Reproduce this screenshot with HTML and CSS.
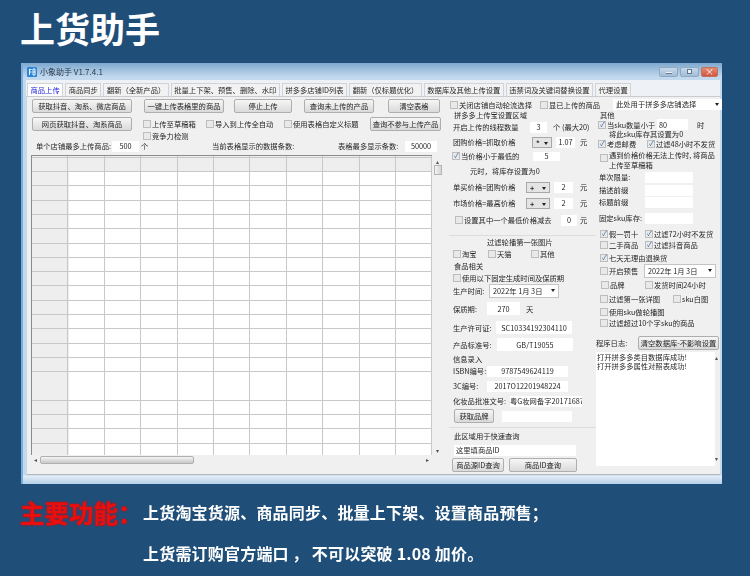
FILE: index.html
```html
<!DOCTYPE html>
<html lang="zh-CN">
<head>
    <meta charset="UTF-8">
    <meta name="viewport" content="width=device-width, initial-scale=1.0">
    <title>上货助手</title>
    <link rel="stylesheet" href="styles.css">
</head>
<body>
    <h1 class="page-title">上货助手</h1>

    <!-- Application window -->
    <div class="window">
        <div class="titlebar">
            <svg class="app-icon" viewBox="0 0 10 10">
                <rect width="10" height="10" rx="1" fill="#2f86d8"/>
                <path d="M2.5 2v6M2.5 2.5h2M2.5 5h2M6 2h2v6H6zM6 5h2" fill="none" stroke="#fff" stroke-width="0.9"/>
            </svg>
            <span class="app-name">小象助手 V1.7.4.1</span>
            <div class="win-buttons">
                <span class="win-btn"><i class="glyph-min"></i></span>
                <span class="win-btn"><i class="glyph-max"></i></span>
                <span class="win-btn close">×</span>
            </div>
        </div>

        <div class="tabs">
            <span class="tab active">商品上传</span>
            <span class="tab">商品同步</span>
            <span class="tab">翻新（全新产品）</span>
            <span class="tab">批量上下架、预售、删除、水印</span>
            <span class="tab">拼多多店铺ID列表</span>
            <span class="tab">翻新（仅标题优化）</span>
            <span class="tab">数据库及其他上传设置</span>
            <span class="tab">违禁词及关键词替换设置</span>
            <span class="tab">代理设置</span>
        </div>

        <div class="panel">
            <!-- Left: actions and product table -->
            <div class="col col-left">
                <div class="row h14">
                    <button class="btn ml5 w100">获取抖音、淘系、微店商品</button>
                    <button class="btn ml12 w80">一键上传表格里的商品</button>
                    <button class="btn ml10 w58">停止上传</button>
                    <button class="btn ml12 w70">查询未上传的产品</button>
                    <button class="btn ml14 w52">清空表格</button>
                </div>
                <div class="row h14 mt4">
                    <button class="btn ml5 w100">网页获取抖音、淘系商品</button>
                    <label class="check ml11 w63"><input type="checkbox">上传至草稿箱</label>
                    <label class="check w78"><input type="checkbox">导入到上传全自动</label>
                    <label class="check w86"><input type="checkbox">使用表格自定义标题</label>
                    <button class="btn w71">查询不参与上传产品</button>
                </div>
                <div class="row h9">
                    <label class="check ml116"><input type="checkbox">竞争力检测</label>
                </div>
                <div class="row h12">
                    <span class="ml9 w76">单个店铺最多上传商品:</span>
                    <input class="field w27" value="500">
                    <span class="ml2 w7">个</span>
                    <span class="ml64 w126">当前表格显示的数据条数:</span>
                    <span class="w67">表格最多显示条数:</span>
                    <input class="field w32" value="50000">
                </div>
                <div class="grid-view">
                    <div class="grid-body">
                        <div class="cells"></div>
                        <div class="vscroll">
                            <span class="arrow">▴</span>
                            <span class="vthumb"></span>
                            <span class="spacer"></span>
                            <span class="arrow">▾</span>
                        </div>
                    </div>
                    <div class="hscroll">
                        <span class="arrow">◂</span>
                        <span class="hthumb"></span>
                        <span class="spacer"></span>
                        <span class="arrow">▸</span>
                    </div>
                </div>
            </div>

            <!-- Middle: upload settings -->
            <div class="col col-mid">
                <div class="row h11">
                    <label class="check ml1 w90"><input type="checkbox">关闭店铺自动轮流选择</label>
                    <label class="check"><input type="checkbox">显已上传的商品</label>
                </div>
                <div class="row h10"><span class="ml5">拼多多上传宝设置区域</span></div>
                <div class="row h14">
                    <span class="ml4 w77">开启上传的线程数量</span>
                    <input class="field w17" value="3">
                    <span class="ml6">个 (最大20)</span>
                </div>
                <div class="row h16">
                    <span class="ml4 w79">团购价格=抓取价格</span>
                    <span class="select w20">*</span>
                    <input class="field ml4 w19" value="1.07">
                    <span class="ml5">元</span>
                </div>
                <div class="row h12">
                    <label class="check ml3 w81"><input type="checkbox" checked>当价格小于最低的</label>
                    <input class="field w27 h9" value="5">
                </div>
                <div class="row h17"><span class="ml21">元时，将库存设置为0</span></div>
                <div class="row h16">
                    <span class="ml4 w73">单买价格=团购价格</span>
                    <span class="select w24">+</span>
                    <input class="field ml4 w19" value="2">
                    <span class="ml7">元</span>
                </div>
                <div class="row h16">
                    <span class="ml4 w73">市场价格=最高价格</span>
                    <span class="select w24">+</span>
                    <input class="field ml4 w19" value="2">
                    <span class="ml7">元</span>
                </div>
                <div class="row h18">
                    <label class="check ml6 w106"><input type="checkbox">设置其中一个最低价格减去</label>
                    <input class="field w16" value="0">
                    <span class="ml3">元</span>
                </div>
                <div class="spacer-6"></div>
                <div class="row h13 group-top"><span class="ml38">过滤轮播第一张图片</span></div>
                <div class="row h11">
                    <label class="check ml4 w35"><input type="checkbox">淘宝</label>
                    <label class="check w43"><input type="checkbox">天猫</label>
                    <label class="check"><input type="checkbox">其他</label>
                </div>
                <div class="row h13"><span class="ml5">食品相关</span></div>
                <div class="row h11">
                    <label class="check ml4"><input type="checkbox">使用以下固定生成时间及保质期</label>
                </div>
                <div class="row h15">
                    <span class="ml4 w36">生产时间:</span>
                    <span class="select date w70">2022年 1月 3日</span>
                </div>
                <div class="row h21">
                    <span class="ml4 w34">保质期:</span>
                    <input class="field w33 h13" value="270">
                    <span class="ml6">天</span>
                </div>
                <div class="row h17">
                    <span class="ml4 w43">生产许可证:</span>
                    <input class="field w76 h13" value="SC10334192304110">
                </div>
                <div class="row h17">
                    <span class="ml4 w44">产品标准号:</span>
                    <input class="field w76 h13" value="GB/T19055">
                </div>
                <div class="row h11"><span class="ml4">信息录入</span></div>
                <div class="row h14">
                    <span class="ml4 w34">ISBN编号:</span>
                    <input class="field w81" value="9787549624119">
                </div>
                <div class="row h16">
                    <span class="ml4 w34">3C编号:</span>
                    <input class="field w81" value="2017O12201948224">
                </div>
                <div class="row h14">
                    <span class="ml4 w57">化妆品批准文号:</span>
                    <input class="field w72" value="粤G妆网备字20171687-">
                </div>
                <div class="row h16">
                    <button class="btn ml5 w40">获取品牌</button>
                    <input class="field ml8 w70">
                </div>
                <div class="spacer-3"></div>
                <div class="row h16 group-top"><span class="ml5">此区域用于快速查询</span></div>
                <div class="row h14">
                    <input class="field ml5 w122 left" value="这里填商品ID">
                </div>
                <div class="row h14 mt1">
                    <button class="btn ml3 w52">商品源ID查询</button>
                    <button class="btn ml5 w68">商品ID查询</button>
                </div>
            </div>

            <!-- Right: filters and log -->
            <div class="col col-right">
                <div class="row h11">
                    <span class="select ml17 w109 flat">此处用于拼多多店铺选择</span>
                </div>
                <div class="row h9"><span class="ml4">其他</span></div>
                <div class="row h11">
                    <label class="check ml2 w59"><input type="checkbox" checked>当sku数量小于</label>
                    <input class="field w31 left" value="80">
                    <span class="ml9">时</span>
                </div>
                <div class="row h8"><span class="ml13">将此sku库存其设置为0</span></div>
                <div class="row h12">
                    <label class="check ml2 w49"><input type="checkbox" checked>考虑邮费</label>
                    <label class="check"><input type="checkbox" checked>过滤48小时不发货</label>
                </div>
                <div class="row h20">
                    <label class="check two-line ml4"><input type="checkbox"><span>遇到价格价格无法上传时, 将商品上传至草稿箱</span></label>
                </div>
                <div class="row h14">
                    <span class="ml3 w46">单次限量:</span>
                    <input class="field w48 h11">
                </div>
                <div class="row h12">
                    <span class="ml3 w46">描述前缀</span>
                    <input class="field w48 h11">
                </div>
                <div class="row h12">
                    <span class="ml3 w46">标题前缀</span>
                    <input class="field w48 h11">
                </div>
                <div class="row h20">
                    <span class="ml3 w46">固定sku库存:</span>
                    <input class="field w48 h11">
                </div>
                <div class="row h11">
                    <label class="check ml4 w45"><input type="checkbox" checked>假一罚十</label>
                    <label class="check"><input type="checkbox" checked>过滤72小时不发货</label>
                </div>
                <div class="row h12">
                    <label class="check ml4 w45"><input type="checkbox">二手商品</label>
                    <label class="check"><input type="checkbox" checked>过滤抖音商品</label>
                </div>
                <div class="row h13">
                    <label class="check ml4"><input type="checkbox" checked>七天无理由退换货</label>
                </div>
                <div class="row h14">
                    <label class="check ml4 w44"><input type="checkbox">开启预售</label>
                    <span class="select date w72">2022年 1月 3日</span>
                </div>
                <div class="row h13">
                    <label class="check ml5 w44"><input type="checkbox">品牌</label>
                    <label class="check"><input type="checkbox">发货时间24小时</label>
                </div>
                <div class="row h15">
                    <label class="check ml4 w73"><input type="checkbox">过滤第一张详图</label>
                    <label class="check"><input type="checkbox">sku白图</label>
                </div>
                <div class="row h11">
                    <label class="check ml4"><input type="checkbox">使用sku做轮播图</label>
                </div>
                <div class="row h12">
                    <label class="check ml4"><input type="checkbox">过滤超过10个字sku的商品</label>
                </div>
                <div class="row h14 mt7">
                    <span class="w42">程序日志:</span>
                    <button class="btn w81">清空数据库-不影响设置</button>
                </div>
                <div class="log">
                    <div class="log-text">打开拼多多类目数据库成功!<br>打开拼多多属性对照表成功!</div>
                    <div class="log-scroll">
                        <span class="arrow">▴</span>
                        <span class="arrow">▾</span>
                    </div>
                </div>
            </div>
        </div>
    </div>

    <!-- Feature notes -->
    <div class="promo">
        <div class="promo-line first">
            <span class="promo-head">主要功能：</span>
            <span>上货淘宝货源、商品同步、批量上下架、设置商品预售；</span>
        </div>
        <div class="promo-line second">上货需订购官方端口<span class="wide-comma">，</span>不可以突破 1.08 加价。</div>
    </div>
</body>
</html>
```

FILE: styles.css
```css
/* Basic Styling */
* {
    box-sizing: border-box;
    margin: 0;
    padding: 0;
}
body {
    width: 750px;
    height: 576px;
    overflow: hidden;
    background-color: #1f4e79;
    font-family: "Noto Sans CJK SC", "Liberation Sans", sans-serif;
}

.page-title {
    height: 63px;
    padding-left: 20px;
    line-height: 56px;
    font-size: 35px;
    font-weight: 700;
    color: #ffffff;
}

/* Window frame */
.window {
    width: 701px;
    height: 421px;
    margin-left: 21px;
    padding: 0 2px 0 4px;
    background: linear-gradient(#7ea8cf, #c2d9ee 14px, #c2d9ee 412px, #e3edf5 413px, #b4d1e9);
    border-left: 2px solid #78afdc;
    font-size: 7.3px;
    color: #262626;
    filter: blur(0.35px);
}

.titlebar {
    display: flex;
    align-items: center;
    height: 17px;
}
.app-icon {
    width: 10px;
    height: 10px;
}
.app-name {
    margin-left: 3px;
    font-size: 8px;
    color: #2a3a4a;
}
.win-buttons {
    display: flex;
    gap: 2px;
    margin-left: auto;
    margin-right: 2px;
}
.win-btn {
    display: flex;
    align-items: center;
    justify-content: center;
    width: 19px;
    height: 10px;
    border: 1px solid #8fa9c2;
    border-radius: 2px;
    background: linear-gradient(#c6d8e8, #a3bdd6);
}
.win-btn.close {
    width: 17px;
    border-color: #c2705c;
    background: linear-gradient(#e58a74, #d2553f);
    color: #fff;
    font-size: 9px;
    line-height: 8px;
}
.glyph-min {
    width: 6px;
    height: 2px;
    margin-top: 3px;
    background: #eef3f8;
    border-bottom: 1px solid #5d7b99;
}
.glyph-max {
    width: 5px;
    height: 5px;
    border: 1px solid #5d7b99;
    background: #eef3f8;
}

/* Tabs */
.tabs {
    display: flex;
    gap: 2px;
    height: 16px;
    padding: 3px 0 0 1px;
    margin-left: -1px;
    background-color: #eef2f6;
}
.tab {
    height: 13px;
    padding: 0 2.5px;
    line-height: 13px;
    white-space: nowrap;
    background-color: #f2f2f2;
    border: 1px solid #d0d4d8;
    border-bottom: none;
}
.tab.active {
    color: #2222dd;
    background-color: #ffffff;
}

/* Main panel */
.panel {
    display: flex;
    height: 379px;
    background-color: #f0f0f0;
    border-top: 1px solid #c8ccd0;
    border-bottom: 1px solid #b4b8bc;
}
.col {
    flex: none;
    padding-top: 2px;
}
.col-left { width: 422px; }
.col-mid { width: 147px; }
.col-right { width: 124px; }

.row {
    display: flex;
    align-items: center;
    white-space: nowrap;
}
.group-top { border-top: 1px solid #dcdcdc; }
.spacer-6 { height: 6px; }
.spacer-3 { height: 3px; }

/* Form controls */
.btn {
    height: 14px;
    flex: none;
    font: inherit;
    color: #262626;
    background: linear-gradient(#f6f6f6, #dadada);
    border: 1px solid #aeaeae;
    border-radius: 2px;
}
.check {
    display: flex;
    align-items: center;
    gap: 1px;
    flex: none;
}
.check input {
    appearance: none;
    flex: none;
    width: 8px;
    height: 8px;
    background-color: #e9e9e9;
    border: 1px solid #bdbdbd;
    font-size: 7px;
    line-height: 6px;
    color: #3a6ea8;
    text-align: center;
}
.check input:checked::before {
    content: "✓";
}
.two-line {
    align-items: flex-start;
    width: 116px;
    white-space: normal;
    line-height: 10px;
}
.two-line input { margin-top: 4px; }
.field {
    flex: none;
    height: 11px;
    font: inherit;
    color: #262626;
    text-align: center;
    background-color: #ffffff;
    border: none;
    outline: none;
}
.field.left {
    padding-left: 2px;
    text-align: left;
}
.select {
    position: relative;
    flex: none;
    height: 11px;
    padding-left: 3px;
    line-height: 10px;
    background-color: #e4e4e4;
    border: 1px solid #a8a8a8;
    font-weight: 700;
}
.select::after {
    content: "";
    position: absolute;
    right: 3px;
    top: 4px;
    border: 2px solid transparent;
    border-top: 3px solid #222;
    border-bottom: none;
}
.select.date {
    height: 14px;
    line-height: 12px;
    font-weight: 400;
    background-color: #ffffff;
    border-color: #c4c4c4;
}
.select.flat {
    font-weight: 400;
    background-color: #ffffff;
    border: none;
}

/* Product table */
.grid-view {
    width: 412px;
    height: 309px;
    margin: 3px 0 0 4px;
    display: flex;
    flex-direction: column;
}
.grid-body {
    display: flex;
    height: 300px;
}
.cells {
    flex: 1;
    background-color: #ffffff;
    background-image:
        repeating-linear-gradient(90deg, transparent 0 35.4px, #c8c8c8 35.4px 36.4px),
        repeating-linear-gradient(transparent 0 0.7px, #c8c8c8 0.7px 1.7px, transparent 1.7px 14.3px),
        linear-gradient(#eeeeee, #eeeeee),
        linear-gradient(#eeeeee, #eeeeee);
    background-size: 100% 100%, 100% 100%, 37px 100%, 100% 16px;
    background-repeat: no-repeat;
    border-top: 1px solid #8c8c8c;
    border-left: 1px solid #8c8c8c;
}
.vscroll {
    display: flex;
    flex-direction: column;
    align-items: center;
    width: 11px;
    padding: 3px 0 1px;
}
.vthumb {
    width: 8px;
    height: 10px;
    background: linear-gradient(90deg, #f4f4f4, #d4d4d4);
    border: 1px solid #b4b4b4;
}
.hscroll {
    display: flex;
    align-items: center;
    height: 9px;
    padding: 0 14px 0 3px;
}
.hthumb {
    width: 154px;
    height: 8px;
    margin-left: 3px;
    background: linear-gradient(#f4f4f4, #c8c8c8);
    border: 1px solid #b0b0b0;
    border-radius: 2px;
}
.spacer { flex: 1; }
.arrow {
    font-size: 6px;
    line-height: 7px;
    color: #555;
}

/* Log box */
.log {
    display: flex;
    justify-content: space-between;
    width: 124px;
    height: 114px;
    margin-top: 2px;
}
.log-text {
    width: 119px;
    padding: 1px;
    line-height: 9px;
    background-color: #ffffff;
}
.log-scroll {
    display: flex;
    flex-direction: column;
    justify-content: space-between;
    width: 5px;
    padding: 2px 0 4px;
}

/* Feature notes */
.promo {
    color: #ffffff;
    font-size: 16px;
    font-weight: 700;
    letter-spacing: 0.2px;
    filter: blur(0.25px);
}
.promo-line {
    display: flex;
    align-items: center;
}
.promo-line.first {
    height: 56px;
    padding-left: 20px;
}
.promo-line.second {
    height: 26px;
    padding-left: 143px;
}
.promo-head {
    width: 123px;
    font-size: 24.5px;
    letter-spacing: 0;
    color: #e8100f;
    text-shadow: 0 0 2px #e00000, 0 0 1px #e00000;
}
.wide-comma {
    width: 23px;
    text-align: center;
}

/* Sizes used by the form rows */
.h8 { height: 8px; }
.h9 { height: 9px; }
.h10 { height: 10px; }
.h11 { height: 11px; }
.h12 { height: 12px; }
.h13 { height: 13px; }
.h14 { height: 14px; }
.h15 { height: 15px; }
.h16 { height: 16px; }
.h17 { height: 17px; }
.h18 { height: 18px; }
.h20 { height: 20px; }
.h21 { height: 21px; }

.w7 { width: 7px; flex: none; }
.w16 { width: 16px; flex: none; }
.w17 { width: 17px; flex: none; }
.w19 { width: 19px; flex: none; }
.w20 { width: 20px; flex: none; }
.w24 { width: 24px; flex: none; }
.w27 { width: 27px; flex: none; }
.w31 { width: 31px; flex: none; }
.w32 { width: 32px; flex: none; }
.w33 { width: 33px; flex: none; }
.w34 { width: 34px; flex: none; }
.w35 { width: 35px; flex: none; }
.w36 { width: 36px; flex: none; }
.w40 { width: 40px; flex: none; }
.w42 { width: 42px; flex: none; }
.w43 { width: 43px; flex: none; }
.w44 { width: 44px; flex: none; }
.w45 { width: 45px; flex: none; }
.w46 { width: 46px; flex: none; }
.w48 { width: 48px; flex: none; }
.w49 { width: 49px; flex: none; }
.w52 { width: 52px; flex: none; }
.w57 { width: 57px; flex: none; }
.w58 { width: 58px; flex: none; }
.w59 { width: 59px; flex: none; }
.w63 { width: 63px; flex: none; }
.w67 { width: 67px; flex: none; }
.w68 { width: 68px; flex: none; }
.w70 { width: 70px; flex: none; }
.w71 { width: 71px; flex: none; }
.w72 { width: 72px; flex: none; }
.w73 { width: 73px; flex: none; }
.w76 { width: 76px; flex: none; }
.w77 { width: 77px; flex: none; }
.w78 { width: 78px; flex: none; }
.w79 { width: 79px; flex: none; }
.w80 { width: 80px; flex: none; }
.w81 { width: 81px; flex: none; }
.w86 { width: 86px; flex: none; }
.w90 { width: 90px; flex: none; }
.w100 { width: 100px; flex: none; }
.w106 { width: 106px; flex: none; }
.w109 { width: 109px; flex: none; }
.w122 { width: 122px; flex: none; }
.w126 { width: 126px; flex: none; }

.ml1 { margin-left: 1px; }
.ml2 { margin-left: 2px; }
.ml3 { margin-left: 3px; }
.ml4 { margin-left: 4px; }
.ml5 { margin-left: 5px; }
.ml6 { margin-left: 6px; }
.ml7 { margin-left: 7px; }
.ml8 { margin-left: 8px; }
.ml9 { margin-left: 9px; }
.ml10 { margin-left: 10px; }
.ml11 { margin-left: 11px; }
.ml12 { margin-left: 12px; }
.ml13 { margin-left: 13px; }
.ml14 { margin-left: 14px; }
.ml17 { margin-left: 17px; }
.ml21 { margin-left: 21px; }
.ml38 { margin-left: 38px; }
.ml64 { margin-left: 64px; }
.ml116 { margin-left: 116px; }

.mt1 { margin-top: 1px; }
.mt4 { margin-top: 4px; }
.mt7 { margin-top: 7px; }
```
